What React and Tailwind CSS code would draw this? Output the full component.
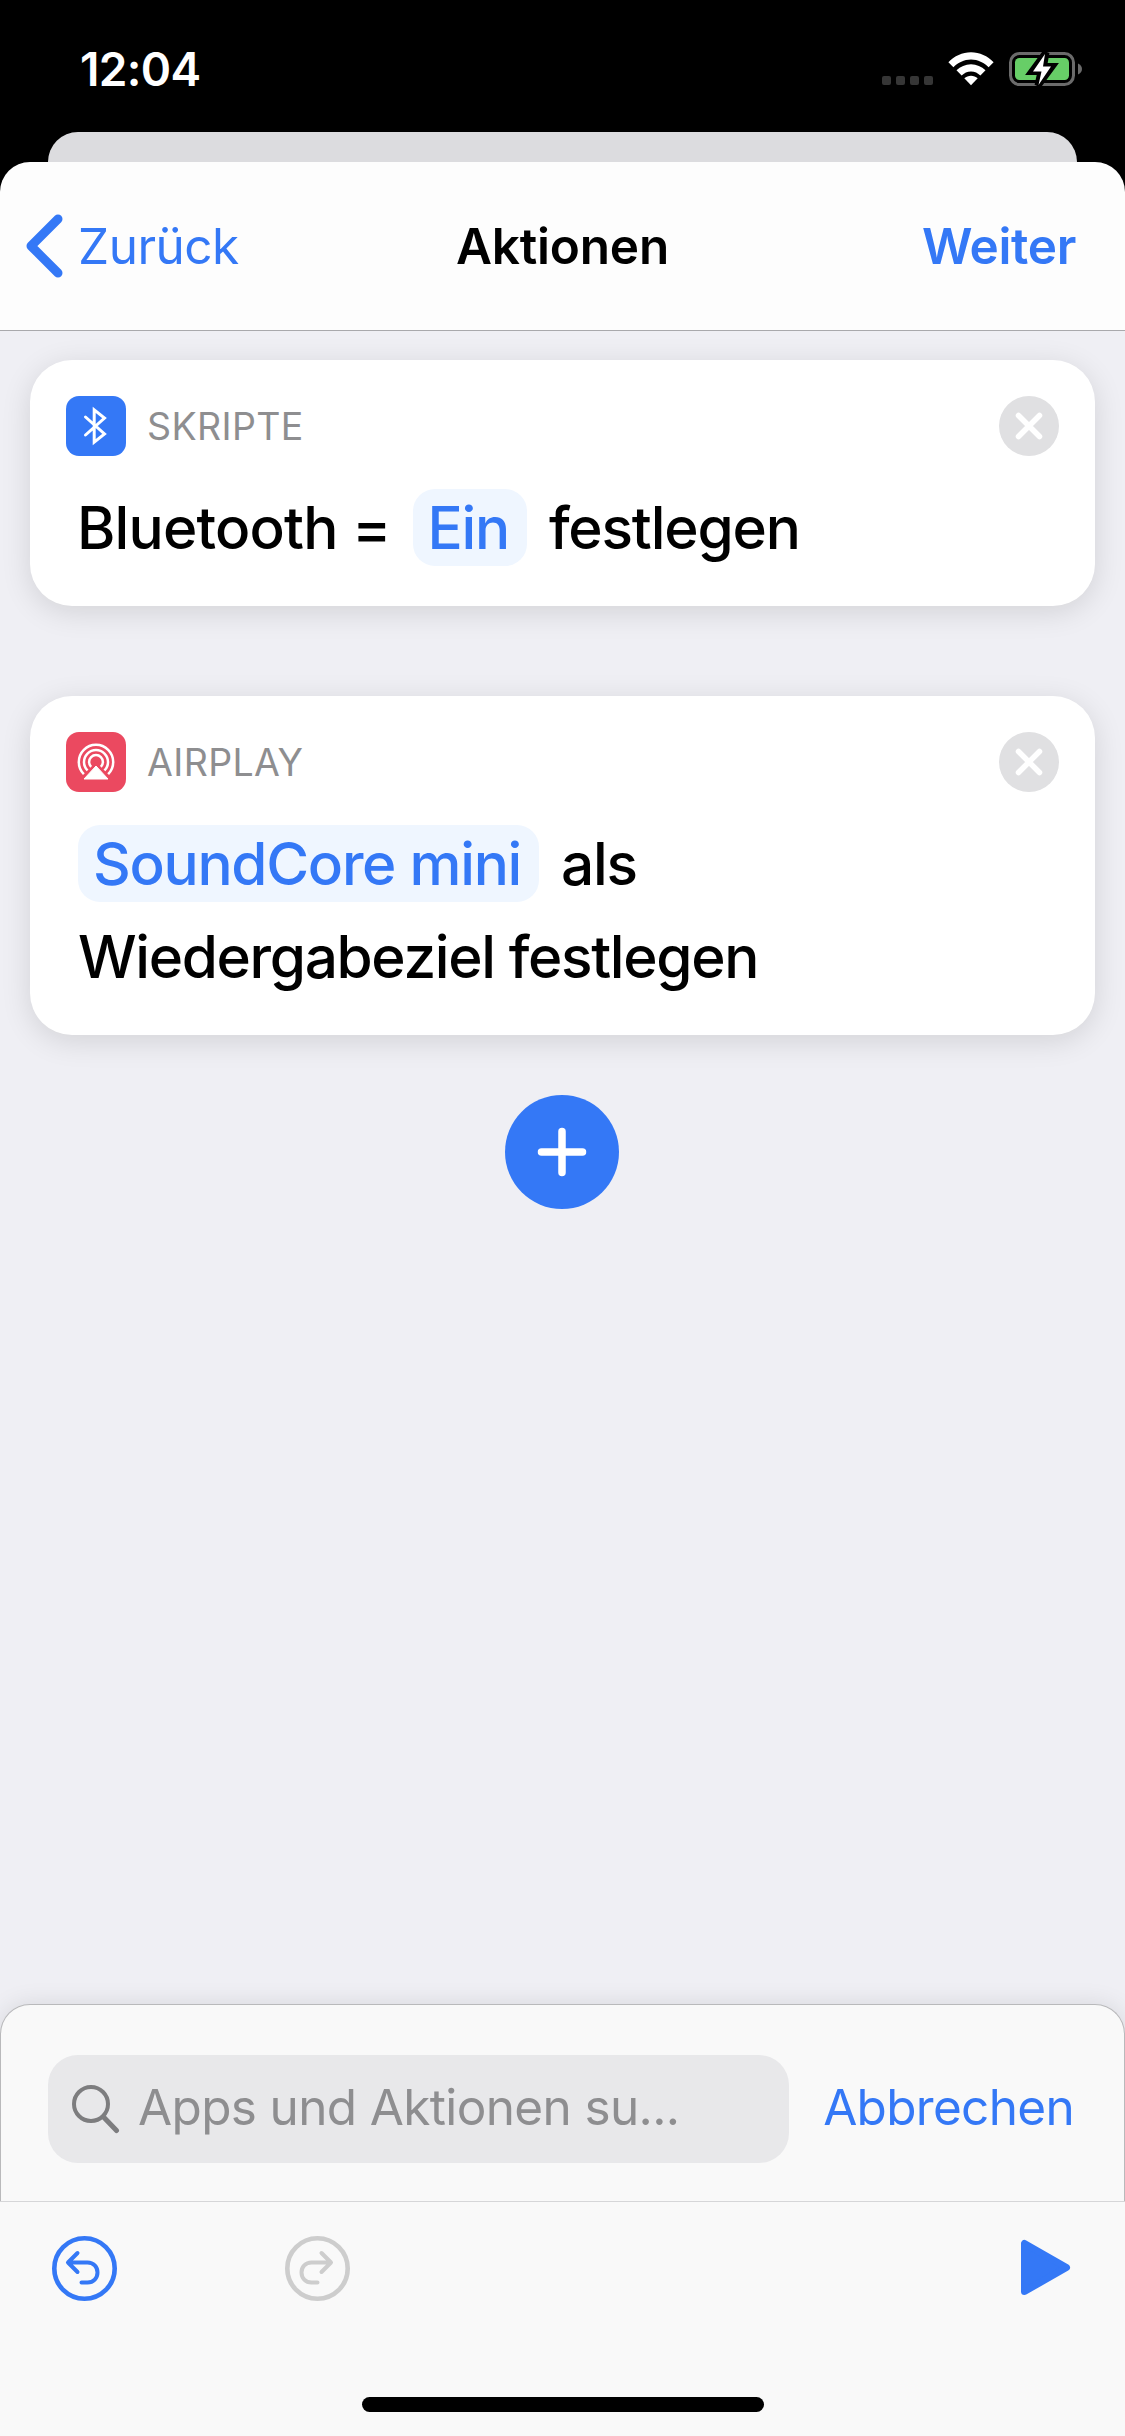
import React from "react";

const StatusIcons = () => (
  <div className="flex items-end">
    <div className="flex gap-[5px] mr-[15px] mb-px">
      {[0, 1, 2, 3].map((i) => (
        <span key={i} className="w-[9px] h-[9px] rounded-[2px] bg-[#363636]"></span>
      ))}
    </div>
    <svg width="46" height="34" viewBox="0 0 46 34" fill="#fff" className="mr-[15px]">
      <path d="M0.4 10.2C6.4 4 14.300 0.300 23 0.300S39.600 4 45.600 10.200L40.600 15.300C36 10.600 29.900 7.500 23 7.500S10 10.600 5.400 15.300Z" />
      <path d="M8.500 18.300C12.400 14.500 17.400 12.200 23 12.200S33.600 14.500 37.500 18.300L32.400 23.500C29.900 21 26.700 19.400 23 19.400S16.100 21 13.600 23.500Z" />
      <path d="M16.300 26.200C18.200 24.600 20.500 23.700 23 23.700S27.800 24.600 29.700 26.200L23 33.300Z" />
    </svg>
    <svg width="74" height="34" viewBox="0 0 74 34">
      <rect x="1.500" y="1.500" width="63" height="31" rx="9" fill="none" stroke="#6b6b6b" strokeWidth="3" />
      <rect x="6" y="6" width="54" height="22" rx="4.500" fill="#67ce67" />
      <path d="M69 11.500C71.500 12.500 73 14.600 73 17S71.500 21.500 69 22.500Z" fill="#6b6b6b" />
      <path d="M37 0.500L23 19.500H32L29 33.500L43 14.500H34.500Z" fill="#fff" stroke="#000" strokeWidth="7" />
      <path d="M36 2L24 19.500H32.500L29.500 33L42 14.500H34Z" fill="#fff" />
    </svg>
  </div>
);

const BluetoothIcon = () => (
  <div className="w-[60px] h-[60px] rounded-[13px] bg-[#3478f6]">
    <svg width="60" height="60" viewBox="0 0 60 60" fill="none" stroke="#fff" strokeWidth="3" strokeLinecap="round">
      <path d="M19.500 21L38.500 38L28.200 46.200V13.800L38.500 22L19.500 39" />
    </svg>
  </div>
);

const AirPlayIcon = () => (
  <div className="w-[60px] h-[60px] rounded-[13px] bg-[#eb4960]">
    <svg width="60" height="60" viewBox="0 0 60 60" fill="none">
      <circle cx="30" cy="30" r="17.200" stroke="#fff" strokeWidth="2.500" />
      <circle cx="30" cy="30" r="12" stroke="#fff" strokeWidth="2.500" />
      <circle cx="30" cy="30" r="6.900" stroke="#fff" strokeWidth="2.500" />
      <path d="M30 30L8 52H52Z" fill="#eb4960" />
      <path d="M30 34L18 47H42Z" fill="#fff" stroke="#fff" strokeWidth="1" strokeLinejoin="round" />
    </svg>
  </div>
);

const ActionCard = ({ icon, label, className, children }) => (
  <div className={`mx-[30px] pt-9 rounded-[42px] bg-white shadow-[0_6px_30px_rgba(0,0,0,0.12)] ${className}`}>
    <div className="flex items-center pl-9 pr-9">
      {icon}
      <span className="ml-[21px] pt-px text-[37.500px] leading-[59px] tracking-[0.010em] text-[#8e8e90]">{label}</span>
      <svg width="60" height="60" viewBox="0 0 60 60" className="ml-auto">
        <circle cx="30" cy="30" r="30" fill="#e0e0e2" />
        <path d="M19.500 19.500L40.500 40.500M40.500 19.500L19.500 40.500" stroke="#fff" strokeWidth="5.500" strokeLinecap="round" />
      </svg>
    </div>
    <div className="pl-12 pt-[25px] text-[58.500px] leading-[93px] font-medium tracking-[-0.022em] text-black">
      {children}
    </div>
  </div>
);

const Token = ({ children }) => (
  <span className="flex items-center h-[77px] pl-[15px] pr-[18px] rounded-[22px] bg-[#eff6ff] text-[#3478f6]">{children}</span>
);

export default function App() {
  return (
    <div className="w-[1125px] h-[2436px] flex flex-col overflow-hidden bg-black font-['Inter','Liberation_Sans',sans-serif]">
      {/* Status bar */}
      <div className="h-[132px] flex items-start justify-between pl-[80px] pr-[42px] pt-[52px]">
        <span className="text-[46px] leading-[34px] font-semibold tracking-[-0.014em] text-white">12:04</span>
        <StatusIcons />
      </div>

      <div className="h-[30px] ml-12 mr-12 rounded-t-[30px] bg-[#dcdcdf]"></div>

      {/* Navigation */}
      <header className="h-[169px] shrink-0 grid grid-cols-3 items-center border-b border-[#a9a9ac] rounded-t-[30px] bg-[#fdfdfd] text-[49.500px] leading-[60px] text-[#3478f6]">
        <div className="flex items-center pl-[25px]">
          <svg width="38" height="64" viewBox="0 0 38 64" fill="none" stroke="#3478f6" strokeWidth="9" strokeLinecap="round" strokeLinejoin="round">
            <path d="M33 5L6 32L33 59" />
          </svg>
          <span className="ml-[15px] tracking-[-0.010em]">Zurück</span>
        </div>
        <span className="text-center font-semibold tracking-[-0.004em] text-black">Aktionen</span>
        <span className="pr-[49px] text-right font-semibold tracking-[-0.007em]">Weiter</span>
      </header>

      {/* Workflow */}
      <main className="flex-1 pt-[29px] bg-[#efeff4]">
        <ActionCard icon={<BluetoothIcon />} label="SKRIPTE" className="h-[246px]">
          <div className="flex items-center">
            <span className="-ml-px tracking-[-0.014em]">Bluetooth =</span>
            <span className="ml-[22px]"><Token>Ein</Token></span>
            <span className="ml-[22px] tracking-[-0.020em]">festlegen</span>
          </div>
        </ActionCard>
        <ActionCard icon={<AirPlayIcon />} label="AIRPLAY" className="h-[339px] mt-[90px]">
          <div className="flex items-center">
            <Token>SoundCore mini</Token>
            <span className="ml-[22px] tracking-[-0.020em]">als</span>
          </div>
          <div className="tracking-[-0.023em]">Wiedergabeziel festlegen</div>
        </ActionCard>
        <div className="flex justify-center mt-[60px] pr-px">
          <svg width="114" height="114" viewBox="0 0 114 114">
            <circle cx="57" cy="57" r="57" fill="#3478f6" />
            <path d="M57 36.500V77.500M36.500 57H77.500" stroke="#fff" strokeWidth="7.500" strokeLinecap="round" />
          </svg>
        </div>
      </main>

      {/* Search panel */}
      <div className="bg-[#efeff4]">
        <div className="h-[197px] flex items-start pt-[50px] pl-[47px] pr-[50px] border border-b-0 border-[#b9b9bb] rounded-t-[30px] bg-[#f9f9f9] shadow-[0_0_24px_rgba(0,0,0,0.10)] text-[49.500px]">
          <div className="w-[741px] h-[108px] flex items-center pl-[24px] rounded-[30px] bg-[#e8e8ea] text-[#8e8e90]">
            <svg width="48" height="50" viewBox="0 0 48 50" fill="none" stroke="#7d7d7f" strokeLinecap="round">
              <circle cx="19" cy="20" r="17" strokeWidth="4" />
              <path d="M32 33.500L44.500 46.500" strokeWidth="5" />
            </svg>
            <span className="ml-[18px] pb-1 leading-[104px] tracking-[-0.013em]">Apps und Aktionen su...</span>
          </div>
          <span className="ml-auto leading-[104px] tracking-[-0.014em] text-[#3478f6]">Abbrechen</span>
        </div>
      </div>

      {/* Toolbar */}
      <footer className="h-[235px] shrink-0 flex flex-col justify-between border-t border-[#d6d6d8] bg-[#f9f9f9]">
        <div className="flex items-center pl-[51px] pr-[54px] pt-[33px]">
          <svg width="66" height="66" viewBox="0 0 66 66" fill="none" stroke="#3478f6" strokeLinecap="round" strokeLinejoin="round">
            <circle cx="33.500" cy="33.500" r="30.200" strokeWidth="4.600" />
            <path d="M26.500 18L17 27.500L26.500 37M18 27.500H36.500C42.500 27.500 46.500 32 46.500 37.500S42.500 47.500 36.500 47.500H30.500" strokeWidth="4" />
          </svg>
          <svg width="66" height="66" viewBox="0 0 66 66" fill="none" stroke="#cdcdcd" strokeLinecap="round" strokeLinejoin="round" className="ml-[167px]">
            <circle cx="33.500" cy="33.500" r="30.200" strokeWidth="4.600" />
            <path d="M37.500 18L47 27.500L37.500 37M46 27.500H27.500C21.500 27.500 17.500 32 17.500 37.500S21.500 47.500 27.500 47.500H33.500" strokeWidth="4" />
          </svg>
          <svg width="50" height="58" viewBox="0 0 50 58" className="ml-auto">
            <path d="M3.500 4.500V52.500L45.500 28.500Z" fill="#3478f6" stroke="#3478f6" strokeWidth="7" strokeLinejoin="round" />
          </svg>
        </div>
        <div className="w-[402px] h-[15px] mx-auto mb-6 rounded-full bg-black"></div>
      </footer>
    </div>
  );
}
